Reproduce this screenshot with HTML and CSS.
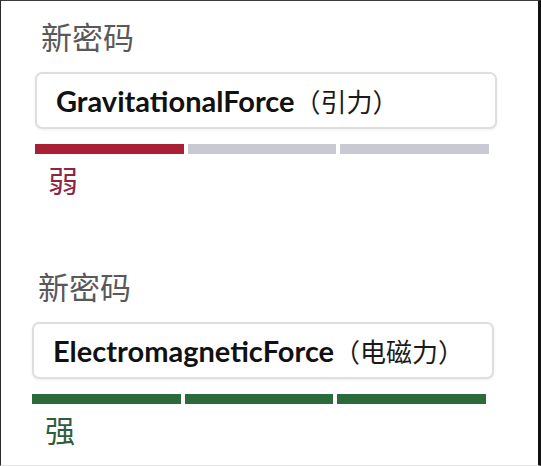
FILE: index.html
```html
<!DOCTYPE html>
<html lang="zh">
<head>
  <meta charset="utf-8">
  <title>新密码</title>
  <link rel="stylesheet" href="styles.css">
</head>
<body>
  <div class="frame">
    <div class="field">
      <label class="field-label" for="pw1">新密码</label>
      <div class="input-box" id="pw1">GravitationalForce<span class="cjk">（引力）</span></div>
      <div class="meter weak">
        <span class="seg on"></span>
        <span class="seg"></span>
        <span class="seg"></span>
      </div>
      <div class="meter-text weak">弱</div>
    </div>

    <div class="field second">
      <label class="field-label" for="pw2">新密码</label>
      <div class="input-box" id="pw2">ElectromagneticForce<span class="cjk">（电磁力）</span></div>
      <div class="meter strong">
        <span class="seg on"></span>
        <span class="seg on"></span>
        <span class="seg on"></span>
      </div>
      <div class="meter-text strong">强</div>
    </div>
  </div>
</body>
</html>
```

FILE: styles.css
```css
:root {
  --label-color: #595959;
  --box-border: #dedede;
  --seg-off: #c9c9d3;
  --weak: #a81f36;
  --weak-text: #8e2443;
  --strong: #2b6a3b;
  --strong-text: #2f5e3c;
  --cjk: "Noto Sans CJK SC", "Noto Sans", sans-serif;
}

* {
  margin: 0;
  padding: 0;
  box-sizing: border-box;
}

body {
  width: 541px;
  height: 466px;
  overflow: hidden;
  background: #ffffff;
  font-family: Lato, "Noto Sans CJK SC", sans-serif;
}

.frame {
  width: 541px;
  height: 466px;
  border-top: 1px solid #3a3a3a;
  border-left: 1px solid #2a2a2a;
  border-right: 3px solid #111111;
  border-bottom: 1px solid #e4e4e4;
  padding-top: 17px;
}

.field {
  width: 462px;
  margin-left: 34px;
  height: 250px;
}

.field.second {
  margin-left: 31px;
  height: auto;
}

.field-label {
  display: block;
  font-family: var(--cjk);
  font-size: 31px;
  line-height: 36px;
  color: var(--label-color);
  margin-left: 6px;
}

.input-box {
  margin-top: 18px;
  height: 57px;
  border: 2px solid var(--box-border);
  border-radius: 7px;
  box-shadow: 0 1px 3px rgba(0, 0, 0, 0.07);
  padding-left: 19px;
  display: flex;
  align-items: center;
  font-size: 29px;
  font-weight: 700;
  color: #111111;
  white-space: nowrap;
}

.input-box .cjk {
  font-family: var(--cjk);
  font-weight: 400;
  font-size: 26px;
  color: #1a1a1a;
}

.meter {
  display: flex;
  gap: 4px;
  margin-top: 15px;
  width: 454px;
}

.seg {
  flex: 1;
  height: 10px;
  background: var(--seg-off);
}

.meter.weak .seg.on {
  background: var(--weak);
}

.meter.strong .seg.on {
  background: var(--strong);
}

.meter-text {
  font-family: var(--cjk);
  font-size: 30px;
  line-height: 34px;
  margin-top: 8px;
  margin-left: 13px;
}

.meter-text.weak {
  color: var(--weak-text);
}

.meter-text.strong {
  color: var(--strong-text);
}
```
